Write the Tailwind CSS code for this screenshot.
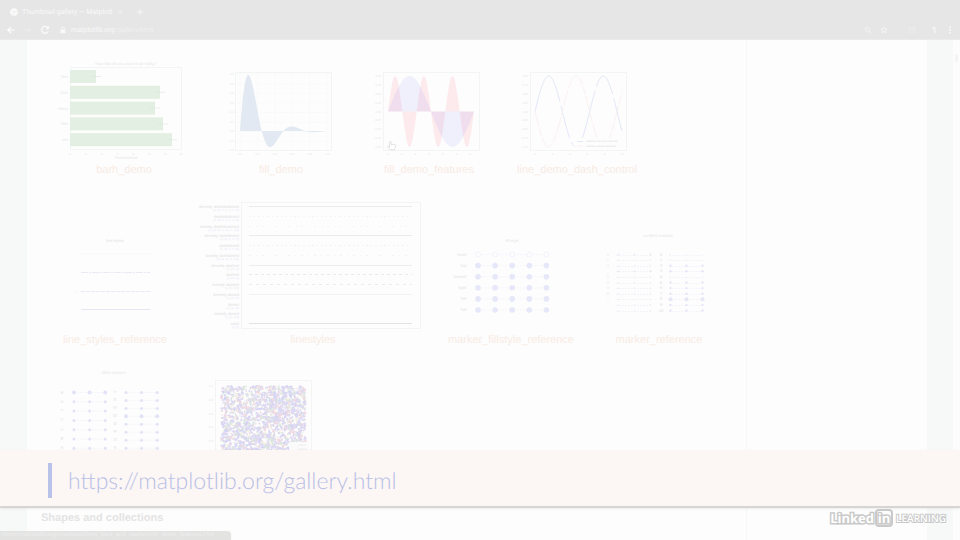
<!DOCTYPE html>
<html lang="en">
<head>
<meta charset="utf-8">
<title>Thumbnail gallery — Matplotlib</title>
<script src="https://cdn.jsdelivr.net/npm/@tailwindcss/browser@4"></script>
</head>
<body class="bg-[#fdfdfd] font-['Liberation_Sans',sans-serif] [text-rendering:geometricPrecision]">
<div class="relative flex h-screen flex-col overflow-hidden">
  <header class="h-10 shrink-0 border-b border-[#ebebeb] bg-[#e6e6e6] font-['Roboto',sans-serif] text-[#f9f9f9]">
    <div class="flex h-5 items-end pl-2.5">
      <div class="flex items-center gap-1">
        <svg class="size-2" viewBox="0 0 8 8"><circle cx="4" cy="4" r="3.8" fill="#fbfbfb"/><path d="M4 4L1.5 2M4 4l3-1M4 4l-1 3" stroke="#e6e6e6" stroke-width=".7"/></svg>
        <span class="w-[90px] text-[7px] leading-4 whitespace-nowrap">Thumbnail gallery — Matplotl</span>
        <button aria-label="Close tab" class="size-2"><svg viewBox="0 0 8 8"><path d="M2 2l4 4M6 2l-4 4" stroke="#f2f2f2" stroke-width=".8"/></svg></button>
      </div>
      <button aria-label="New tab" class="mb-1 ml-3 size-2"><svg viewBox="0 0 8 8"><path d="M4 1v6M1 4h6" stroke="#f6f6f6" stroke-width="1"/></svg></button>
    </div>
    <div class="flex h-5 items-center gap-2 px-1.5">
      <button aria-label="Back" class="size-2.5"><svg viewBox="0 0 10 10" fill="none" stroke="#fff" stroke-width="1.1"><path d="M8.5 5H2M5 1.8L1.8 5 5 8.2"/></svg></button>
      <button aria-label="Forward" class="size-2"><svg viewBox="0 0 10 10" fill="none" stroke="#ededed" stroke-width="1.1"><path d="M1.5 5H8M5 1.8L8.2 5 5 8.2"/></svg></button>
      <button aria-label="Reload" class="size-2.5"><svg viewBox="0 0 10 10" fill="none" stroke="#fbfbfb" stroke-width="1.2"><path d="M8.2 6.2A3.4 3.4 0 1 1 7.6 2.6"/><path d="M8.9.8v3.4H5.5z" fill="#fbfbfb" stroke="none"/></svg></button>
      <div class="flex flex-1 items-center gap-1 pl-px text-[7px] leading-4">
        <svg class="size-2" viewBox="0 0 8 8"><rect x="1.5" y="3.2" width="5" height="4" rx=".5" fill="#f8f8f8"/><path d="M2.6 3.4V2.2a1.4 1.4 0 0 1 2.8 0v1.2" fill="none" stroke="#f8f8f8" stroke-width=".8"/></svg>
        <a href="#" class="whitespace-nowrap">matplotlib.org<span class="text-[#f0f0f0]">/gallery.html</span></a>
      </div>
      <div class="flex items-center gap-2">
        <svg class="size-2" viewBox="0 0 8 8" fill="none" stroke="#f1f1f1"><circle cx="3.4" cy="3.4" r="2.3"/><path d="M5 5l2.3 2.3M2.3 3.4h2.2"/></svg>
        <svg class="size-2" viewBox="0 0 8 8" fill="none" stroke="#f6f6f6" stroke-width=".9"><path d="M4 .9l.9 2h2.2L5.4 4.4l.6 2.4L4 5.5 2 6.8l.6-2.4L.9 2.9h2.2z"/></svg>
        <svg class="ml-3 size-2" viewBox="0 0 8 8" fill="none" stroke="#ececec"><path d="M1 1.5h6v2.4Q6.5 6 4 7.2 1.5 6 1 3.9zM2.8 4l1.2 1 1.8-2"/></svg>
        <svg class="ml-1.5 size-2" viewBox="0 0 8 8"><path d="M2.5 1H5.5V7H4V3H2.5z" fill="#f3f3f3"/></svg>
        <svg class="size-2" viewBox="0 0 8 8" fill="#fbfbfb"><circle cx="4" cy="1.2" r=".9"/><circle cx="4" cy="4" r=".9"/><circle cx="4" cy="6.8" r=".9"/></svg>
      </div>
    </div>
  </header>

  <div class="flex min-h-0 flex-1 overflow-hidden bg-[#f6f9f8]">
    <div class="w-[27px] shrink-0"></div>
    <main class="flex-1 bg-[#fdfdfd] pt-2.5 pl-3.5 text-center text-[11px] leading-4 text-[#f8ebe4]">
      <div class="flex">
        <a href="#" class="w-[166px]"><svg id="barh" class="h-28 w-full" viewBox="41 50 166 112"></svg>barh_demo</a>
        <a href="#" class="w-37"><svg id="fill" class="h-28 w-full" viewBox="207 50 148 112"></svg>fill_demo</a>
        <a href="#" class="w-37"><svg id="feat" class="h-28 w-full" viewBox="355 50 148 112"></svg>fill_demo_features</a>
        <a href="#" class="w-37"><svg id="dash" class="h-28 w-full" viewBox="503 50 148 112"></svg>line_demo_dash_control</a>
      </div>
      <div class="mt-3 flex">
        <a href="#" class="w-37"><svg id="lsref" class="h-[142px] w-full" viewBox="41 190 148 142"></svg>line_styles_reference</a>
        <a href="#" class="w-62"><svg id="lstyles" class="h-[142px] w-full" viewBox="189 190 248 142"></svg>linestyles</a>
        <a href="#" class="w-37"><svg id="mfill" class="h-[142px] w-full" viewBox="437 190 148 142"></svg>marker_fillstyle_reference</a>
        <a href="#" class="w-37"><svg id="mref" class="h-[142px] w-full" viewBox="585 190 148 142"></svg>marker_reference</a>
      </div>
      <div class="mt-3 flex">
        <a href="#" aria-label="filled markers" class="w-37"><svg id="filled" class="h-28 w-full" viewBox="41 360 148 112"></svg></a>
        <a href="#" aria-label="scatter" class="w-37"><svg id="scatter" class="h-28 w-full" viewBox="189 360 148 112"></svg></a>
      </div>
      <h2 class="mt-[38px] text-left text-[11px] leading-4 font-bold text-[#e4e4e4]">Shapes and collections</h2>
    </main>
    <aside class="w-[181px] shrink-0 border-l border-[#f6f8f8] bg-[#fdfdfd]"></aside>
    <div class="w-[26px] shrink-0"></div>
    <div class="w-[7px] shrink-0 bg-[#fcfcfc] px-0.5 pt-3.5"><div class="h-2 rounded-full bg-[#f3f3f3]"></div></div>
  </div>

  <div class="absolute bottom-0 left-0 h-[9px] w-[231px] rounded-tr-sm bg-[#e3e3e2] pl-0.5 text-[6px] leading-[9px] whitespace-nowrap text-[#eeeeee] shadow-sm shadow-black/5">https://matplotlib.org/examples/lines_bars_and_markers/fill_demo_features.html</div>

  <section class="absolute inset-x-0 bottom-8 flex h-[58px] items-center gap-4 border-b-2 border-[#d7d5d4] bg-[#fcf6f5] pt-1 pl-12 shadow-sm shadow-black/5">
    <div class="h-[35px] w-1 bg-[#b9c2e8]"></div>
    <a href="#" class="font-['Lato',sans-serif] text-[23px] leading-7 font-light text-[#b8c0e5]">https://matplotlib.org/gallery.html</a>
  </section>

  <div class="absolute right-3.5 bottom-3 flex items-center gap-px font-['Open_Sans',sans-serif] leading-5 font-bold text-white [paint-order:stroke_fill]">
    <span class="text-[13px] [-webkit-text-stroke:3px_#c9c9c9]">Linked</span>
    <span class="flex h-[18px] w-[18px] items-center justify-center rounded-sm border-2 border-[#c9c9c9] text-[13px] leading-4 [-webkit-text-stroke:3px_#c9c9c9]">in</span>
    <span class="pl-0.5 text-[10px] font-semibold [-webkit-text-stroke:2px_#c9c9c9]">LEARNING</span>
  </div>
</div>

<script>
const $ = id => document.getElementById(id);
const line = (x1, y1, x2, y2, c, extra = '') => `<line x1="${x1}" y1="${y1}" x2="${x2}" y2="${y2}" stroke="${c}" ${extra}/>`;
const box = (x, y, w, h) => `<rect x="${x}" y="${y}" width="${w}" height="${h}" fill="none" stroke="#f3f5f5"/>`;
const text = (x, y, s, t, a = 'middle', c = '#e7e7e7') => `<text x="${x}" y="${y}" font-size="${s}" text-anchor="${a}" fill="${c}">${t}</text>`;
const dot = (x, y, r, c) => `<circle cx="${x}" cy="${y}" r="${r}" fill="${c}"/>`;
const curve = (x0, x1, f) => Array.from({length: 121}, (_, i) => { const t = i / 120; return `${(x0 + (x1 - x0) * t).toFixed(2)},${f(t).toFixed(2)}`; }).join(' ');
const ticks = (x, y0, y1, labels) => labels.map((l, i) => text(x, y0 + (y1 - y0) * i / (labels.length - 1) + 1, 3, l, 'end')).join('');
const ticksX = (y, x0, x1, labels) => labels.map((l, i) => text(x0 + (x1 - x0) * i / (labels.length - 1), y, 3, l)).join('');

let s = text(126, 65, 4, 'How fast do you want to go today?') + box(70.5, 67.5, 111, 82);
[['Tom', 96], ['Dick', 160], ['Harry', 155], ['Slim', 163], ['Jim', 172]].forEach(([n, x], i) => {
  const y = 70 + i * 15.8;
  s += `<rect x="70" y="${y}" width="${x - 70}" height="13" fill="#e2efe2"/>` + line(x - 5, y + 6.5, x + 5, y + 6.5, '#dde6dd', 'stroke-width=".6"') + text(68, y + 8, 4, n, 'end');
});
$('barh').innerHTML = s + ticksX(155, 70, 181, [0, 2, 4, 6, 8, 10, 12, 14]) + text(126, 159, 4, 'Performance');

s = '';
for (let i = 0; i < 6; i++) s += line(240 + i * 17.4, 73, 240 + i * 17.4, 150, '#f9fafa');
for (let i = 0; i < 8; i++) s += line(236, 74 + i * 9.6, 331, 74 + i * 9.6, '#f9fafa');
$('fill').innerHTML = s + box(235.5, 72.5, 96, 78)
  + `<polygon fill="#e2e9f2" points="240,131 ${curve(240, 327, t => 131 - 97 * Math.sin(4 * Math.PI * t) * Math.exp(-5 * t))} 327,131"/>`
  + ticks(234, 74, 150, ['0.6', '0.5', '0.4', '0.3', '0.2', '0.1', '0.0', '-0.1', '-0.2']) + ticksX(155, 240, 327, ['0.0', '0.2', '0.4', '0.6', '0.8', '1.0']);

const ys = ['1.00', '0.75', '0.50', '0.25', '0.00', '-0.25', '-0.50', '-0.75', '-1.00'];
$('feat').innerHTML = box(383.5, 72.5, 96, 78)
  + `<polygon fill="#ff3050" fill-opacity=".09" points="388,111.5 ${curve(388, 474, t => 111.5 - 35.5 * Math.sin(6 * Math.PI * t))} 474,111.5"/>`
  + `<polygon fill="#4040ff" fill-opacity=".07" points="388,111.5 ${curve(388, 474, t => 111.5 - 35.5 * Math.sin(2 * Math.PI * t))} 474,111.5"/>`
  + ticks(381, 76, 147, ys) + ticksX(155, 388, 470, [0, 1, 2, 3, 4, 5, 6])
  + '<path d="M389.5 142.2v4.8l-1.2-.8c-.8-.2-1 .5-.5 1l2.4 2.6h4.2l1-2.2v-2.4c0-.7-.9-.8-1-.2-.1-.8-1.3-.9-1.4-.2-.1-.8-1.4-.8-1.5-.1l-.3.2v-2.8c-.1-1-1.6-1-1.7.1z" fill="#fff" stroke="#d5d5d5" stroke-width=".7"/>';

$('dash').innerHTML = box(530.5, 72.5, 96, 78)
  + `<polyline fill="none" stroke="#e3e7f8" points="${curve(535, 622, t => 111.5 - 35.5 * Math.sin(10 * t))}" stroke-dasharray="68 4 34 4"/>`
  + `<polyline fill="none" stroke="#faf1ef" points="${curve(535, 622, t => 111.5 + 35.5 * Math.sin(10 * t))}" stroke-dasharray="16 2 8 2"/>`
  + '<rect x="575" y="138" width="50" height="11" fill="#fdfdfd"/>' + line(577, 141.5, 583, 141.5, '#e3e7f8') + line(577, 146, 583, 146, '#faefed')
  + text(586, 142, 3, 'Dashes set retroactively', 'start', '#dde0dd') + text(586, 147, 3, 'Dashes set proactively', 'start', '#dde0dd')
  + ticks(528, 76, 147, ys) + ticksX(155, 535, 622, [0, 2, 4, 6, 8, 10]);

$('lsref').innerHTML = text(115, 242, 4, 'line styles', 'middle', '#e3e3e3')
  + [[253.5, "':'", '1 1', '#f4f4fa'], [272.5, "'-.'", '7 1 2 1', '#e9eaf6'], [291.5, "'--'", '4 1', '#e9eaf6'], [309.5, "'-'", '', '#e5e6f2']].map(([y, l, d, c]) =>
    text(78, y + 1, 4, l, 'end', '#f2f2f2') + line(81, y, 150, y, c, `stroke-dasharray="${d}"`)).join('');

const names = ['densely dashdotdotted', 'dashdotdotted', 'loosely dashdotdotted', 'densely dashdotted', 'dashdotted', 'loosely dashdotted', 'densely dashed', 'dashed', 'loosely dashed', 'densely dotted', 'dotted', 'loosely dotted', 'solid'];
const tuples = ['(0, (3, 1, 1, 1, 1, 1))', '(0, (3, 5, 1, 5, 1, 5))', '(0, (3, 10, 1, 10, 1, 10))', '(0, (3, 1, 1, 1))', '(0, (3, 5, 1, 5))', '(0, (3, 10, 1, 10))', '(0, (5, 1))', '(0, (5, 5))', '(0, (5, 10))', '(0, (1, 1))', '(0, (1, 5))', '(0, (1, 10))', '(0, ())'];
const dashes = ['', '2 3 1 3', '2 6 1 4', '', '2 3 1 3', '2 5 1 5', '', '3 3', '3 4', '', '1 3', '1 6', ''];
const tones = ['#ebebeb', '#f4f4f4', '#f4f4f4', '#ebebeb', '#f0f0f0', '#f2f2f2', '#ededed', '#e9e9e9', '#ebebeb', '#f2f2f2', '#f8f8f8', '#f8f8f8', '#e3e3e3'];
$('lstyles').innerHTML = box(241.5, 202.5, 179, 126) + names.map((n, i) => {
  const y = 206.5 + Math.round(i * 9.75);
  return text(239, y + 1, 4, n, 'end', '#dedede') + text(239, y + 4, 3, tuples[i], 'end', '#e7e7f5') + line(249, y, 412, y, tones[i], `stroke-dasharray="${dashes[i]}"`);
}).join('');

s = text(512, 242, 4, 'fill style');
['none', 'top', 'bottom', 'right', 'left', 'full'].forEach((n, i) => {
  const y = 254.5 + i * 11.1;
  s += text(467, y + 1, 4, `'${n}'`, 'end', '#e3e3e3') + line(478, y, 546, y, '#f5f5fb', 'stroke-dasharray="2 1"');
  for (let k = 0; k < 5; k++) s += i ? dot(478 + k * 17.1, y, 2.8, '#e6e7f8') : `<circle cx="${478 + k * 17.1}" cy="${y}" r="2.5" fill="#fdfdfd" stroke="#f0f1fa" stroke-width=".8"/>`;
});
$('mfill').innerHTML = s;

s = text(658, 237, 4, 'un-filled markers');
for (let i = 0; i < 11; i++) {
  const y = 254.5 + i * 5.6, y2 = Math.round(y) + .5;
  s += text(608, y + 1, 4, ["'x'", "'+'", "'|'", "'_'", "'1'", "'2'", "'3'", "'4'", "','", "'.'", "' '"][i], 'middle', '#e9e9e9')
    + text(661, y + 1, 4, i, 'middle', '#dcdcdc')
    + line(616, y2, 651, y2, '#f4f4f8', 'stroke-dasharray="2 1"') + line(669, y2, 703, y2, '#f4f4fa', 'stroke-dasharray="2 1"');
  for (let k = 0; k < 3; k++) s += dot(618.5 + k * 16, y, i === 0 || i === 3 ? 1 : .6, '#e8e8f2') + dot(670.5 + k * 16, y, i === 8 ? 2 : i < 2 || i === 4 ? .5 : 1.2, '#e5e6f7');
}
$('mref').innerHTML = s;

s = text(114, 374, 4, 'filled markers');
for (let i = 0; i < 9; i++) {
  const a = 392.5 + i * 9.3, b = 392.5 + i * 7.95;
  s += text(62, a + 1, 4, "'" + 'ov^<>8spP'[i] + "'", 'middle', '#dadada') + text(115, b + 1, 4, "'" + '*hHDdPXsv'[i] + "'", 'middle', '#dadada')
    + line(74, a, 105, a, '#f4f4fa', 'stroke-dasharray="2 1"') + line(126, b, 157, b, '#f4f4fa', 'stroke-dasharray="2 1"');
  for (let k = 0; k < 3; k++) s += dot(74 + k * 15.6, a, i ? 1.5 : 2, '#e1e3f6') + dot(126 + k * 15.6, b, i === 3 ? 2 : 1.5, '#e1e3f6');
}
$('filled').innerHTML = s;

let seed = 7;
const rnd = () => (seed = (seed * 16807) % 2147483647) / 2147483647;
const hues = ['#d6d4f5', '#dedbf6', '#f1dae1', '#dce8df', '#dfd8f1', '#f4f1e6', '#fdfdfd', '#d8d8f1'];
s = box(215.5, 380.5, 96, 78) + ticks(213, 386, 441, ['1.0', '0.8', '0.6', '0.4', '0.2']);
for (let i = 0; i < 2600; i++) s += dot((221.5 + rnd() * 84).toFixed(1), (386.5 + rnd() * 70).toFixed(1), (.7 + rnd() * .9).toFixed(1), hues[Math.floor(rnd() * hues.length)]);
$('scatter').innerHTML = s + '<rect x="289" y="442" width="20" height="16" fill="#fbfbfb"/>' + text(305, 446, 3, 'point', 'end') + text(307, 450, 3, 'marker', 'end');
</script>
</body>
</html>
